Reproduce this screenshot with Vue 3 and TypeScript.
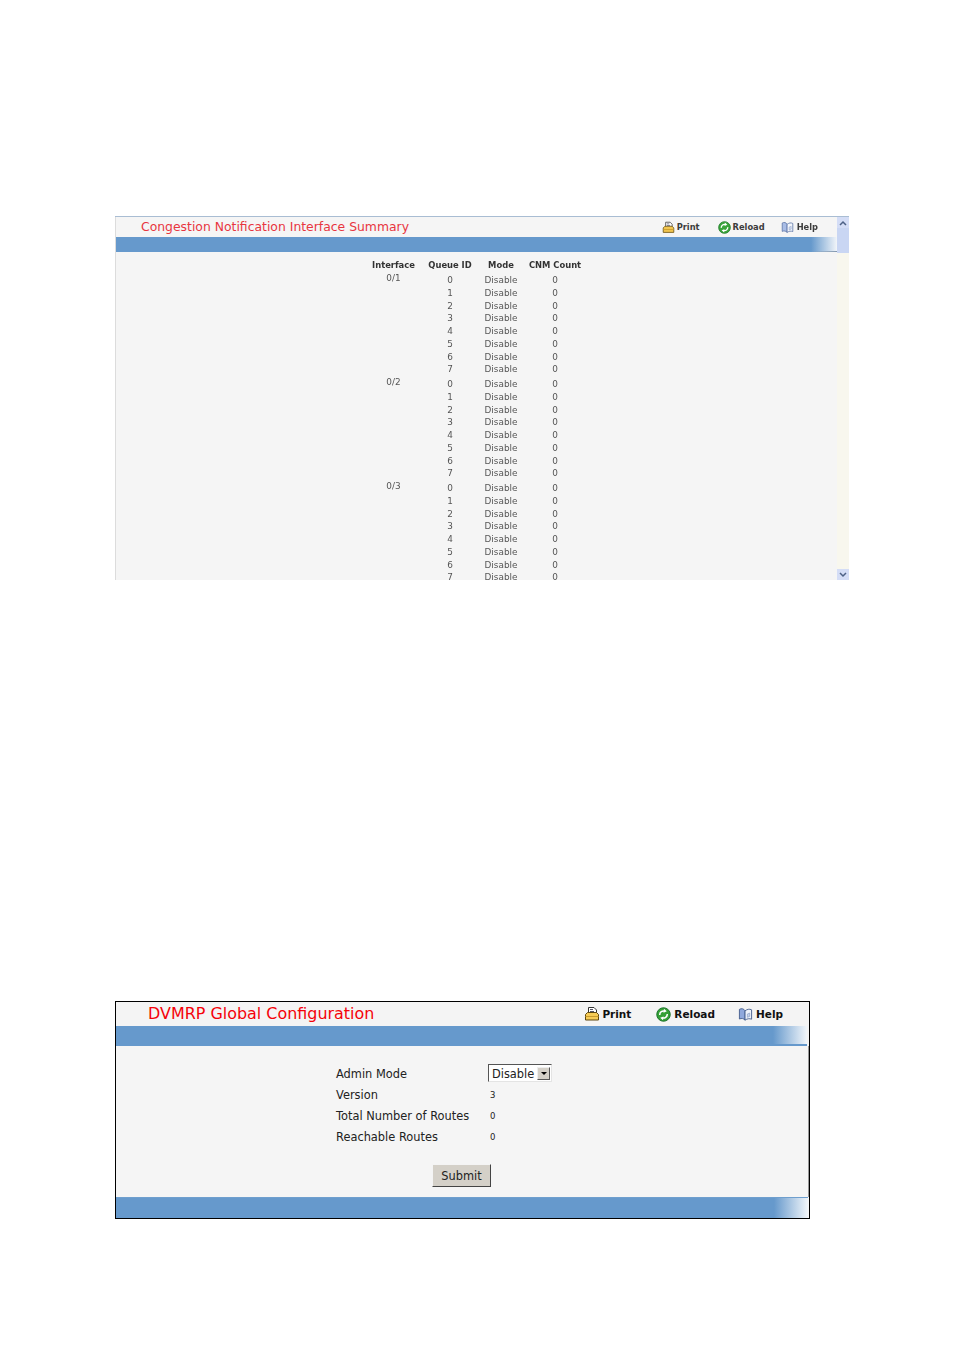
<script setup lang="ts">
interface Group { port: string; queues: number[] }
const queues = [0, 1, 2, 3, 4, 5, 6, 7]
const groups: Group[] = [
  { port: '0/1', queues },
  { port: '0/2', queues },
  { port: '0/3', queues },
]
const facts = [
  { label: 'Version', value: '3' },
  { label: 'Total Number of Routes', value: '0' },
  { label: 'Reachable Routes', value: '0' },
]
</script>

<template>
  <div class="page">
    <section class="shot summary">
      <div class="frame">
        <header class="head">
          <h1 class="title">Congestion Notification Interface Summary</h1>
          <nav class="tools">
            <span class="tool print">
              <svg width="13" height="13" viewBox="0 0 16 16"><path d="M4.500 1.500h5.500l2.500 2.500v5h-8z" fill="#fff" stroke="#444" /><path d="M1.500 8.500l2-2h9l2 2v5.500h-13z" fill="#f2c650" stroke="#6b5415" /><path d="M1.500 10.500h13" stroke="#c99a2a" /><path d="M6 3.500h3M6 5.500h4" stroke="#667" /></svg>
              Print
            </span>
            <span class="tool reload">
              <svg width="13" height="13" viewBox="0 0 16 16"><circle cx="8" cy="8" r="7.200" fill="#3aa53a" stroke="#1d7a2a" /><path d="M4 8.500a4 4 0 0 1 5.500-4M12 7.500a4 4 0 0 1-5.500 4" fill="none" stroke="#fff" stroke-width="1.600" /><path d="M8.500 1.800l3 2.700-3.500 1.500zM7.500 14.200l-3-2.700 3.500-1.500z" fill="#fff" /></svg>
              Reload
            </span>
            <span class="tool help">
              <svg width="13" height="13" viewBox="0 0 16 16"><path d="M1.500 2.500c2.500-1.300 4.500-.8 6 1.500v10c-1.500-1.800-3.500-2.200-6-1.200z" fill="#a9bde6" stroke="#5f76a8" /><path d="M14.500 3c-2.500-1.200-4.500-.6-7 1v10c2.500-1.600 4.500-1.900 7-1z" fill="#f4f7fc" stroke="#5f76a8" /><path d="M10 7.500l2.500-1v3.500l-2.500 1z" fill="#cfdaf0" stroke="#8ea0c4" stroke-width=".6" /></svg>
              Help
            </span>
          </nav>
        </header>
        <div class="band"></div>
        <div class="results">
          <div class="grid labels">
            <span>Interface</span><span>Queue ID</span><span>Mode</span><span>CNM Count</span>
          </div>
          <div v-for="g in groups" :key="g.port" class="grid group">
            <span class="port">{{ g.port }}</span>
            <template v-for="q in g.queues" :key="q">
              <span class="cell">{{ q }}</span><span class="cell">Disable</span><span class="cell">0</span>
            </template>
          </div>
        </div>
      </div>
      <div class="scrollbar">
        <span class="arrow"><svg width="8" height="6" viewBox="0 0 8 6"><path d="M1 5l3-3 3 3" fill="none" stroke="#4d6185" stroke-width="1.500" /></svg></span>
        <span class="thumb"></span>
        <span class="rail"></span>
        <span class="arrow"><svg width="8" height="6" viewBox="0 0 8 6"><path d="M1 1l3 3 3-3" fill="none" stroke="#4d6185" stroke-width="1.500" /></svg></span>
      </div>
    </section>

    <section class="shot dvmrp">
      <header class="head large">
        <h1 class="title">DVMRP Global Configuration</h1>
        <nav class="tools">
          <span class="tool print">
            <svg width="16" height="16" viewBox="0 0 16 16"><path d="M4.500 1.500h5.500l2.500 2.500v5h-8z" fill="#fff" stroke="#333" /><path d="M1.500 8.500l2-2h9l2 2v5.500h-13z" fill="#f6cb55" stroke="#5c4710" /><path d="M1.500 10.500h13" stroke="#c99a2a" /><path d="M6 3.500h3M6 5.500h4" stroke="#556" /></svg>
            Print
          </span>
          <span class="tool reload">
            <svg width="15" height="15" viewBox="0 0 16 16"><circle cx="8" cy="8" r="7.200" fill="#35a035" stroke="#17702a" /><path d="M4 8.500a4 4 0 0 1 5.500-4M12 7.500a4 4 0 0 1-5.500 4" fill="none" stroke="#fff" stroke-width="1.600" /><path d="M8.500 1.800l3 2.700-3.500 1.500zM7.500 14.200l-3-2.700 3.500-1.500z" fill="#fff" /></svg>
            Reload
          </span>
          <span class="tool help">
            <svg width="15" height="15" viewBox="0 0 16 16"><path d="M1.500 2.500c2.500-1.300 4.500-.8 6 1.500v10c-1.500-1.800-3.500-2.200-6-1.200z" fill="#8fa8dc" stroke="#47608f" /><path d="M14.500 3c-2.500-1.200-4.500-.6-7 1v10c2.500-1.600 4.500-1.900 7-1z" fill="#eef2fa" stroke="#47608f" /><path d="M10 7.500l2.500-1v3.500l-2.500 1z" fill="#c4d2ec" stroke="#7f93bc" stroke-width=".6" /></svg>
            Help
          </span>
        </nav>
      </header>
      <div class="band"></div>
      <form class="form" @submit.prevent>
        <div class="facts">
          <span class="key">Admin Mode</span>
          <span class="picker">
            <span class="picked">Disable</span>
            <span class="drop"><i></i></span>
          </span>
          <template v-for="f in facts" :key="f.label">
            <span class="key">{{ f.label }}</span><span class="val">{{ f.value }}</span>
          </template>
        </div>
        <button class="submit" type="submit">Submit</button>
      </form>
      <div class="band foot"></div>
    </section>
  </div>
</template>

<style scoped>
.page {
  width: 954px;
  height: 1350px;
  box-sizing: border-box;
  padding: 216px 0 0 115px;
  background: #fff;
  font-family: "DejaVu Sans", Verdana, sans-serif;
  overflow: hidden;
}
.shot { box-sizing: border-box; }
.summary {
  width: 734px;
  height: 364px;
  display: flex;
  overflow: hidden;
  border-top: 1px solid #a9bdd3;
}
.frame {
  width: 722px;
  background: #f5f5f5;
  border-left: 1px solid #dcdcdc;
  box-sizing: border-box;
  filter: blur(0.35px);
}
.head {
  display: flex;
  align-items: center;
  justify-content: space-between;
  height: 20px;
}
.title {
  margin: 0 0 2px;
  font-weight: 400;
  font-size: 12.4px;
  color: #e8363f;
  padding-left: 25px;
  white-space: nowrap;
}
.tools {
  display: flex;
  align-items: center;
  font-size: 8.3px;
  color: #3c3c3c;
  font-weight: 600;
}
.tool { display: flex; align-items: center; gap: 2px; }
.summary .print { margin-right: 18px; }
.summary .reload { margin-right: 16px; }
.summary .help { gap: 3px; }
.summary .tools { padding-right: 19px; }
.band {
  height: 15px;
  background-color: #6699cc;
  background-image:
    linear-gradient(90deg, transparent calc(100% - 26px), #7f95ad 100%),
    linear-gradient(90deg, #6699cc calc(100% - 26px), #f2f5f9 100%);
  background-size: 100% 1px, 100% 100%;
  background-position: 0 100%, 0 0;
  background-repeat: no-repeat;
}
.results { padding-top: 6px; }
.grid {
  display: grid;
  grid-template-columns: 55px 58px 44px 64px;
  margin-left: 250px;
  text-align: center;
  font-size: 8.9px;
  line-height: 12.75px;
  color: #555;
}
.labels {
  font-weight: 700;
  color: #333;
  font-size: 8.4px;
  height: 16px;
  line-height: 14px;
}
.group { margin-bottom: 2px; }
.port {
  grid-column: 1;
  grid-row: 1 / span 8;
  line-height: 9px;
}
.cell:nth-child(3n + 2) { grid-column: 2; }
.scrollbar {
  width: 12px;
  display: flex;
  flex-direction: column;
  background: #f8f7ee;
  filter: blur(0.35px);
}
.arrow {
  height: 11px;
  background: #d4ddf6;
  display: flex;
  align-items: center;
  justify-content: center;
}
.thumb { height: 25px; background: #c9d6f3; }
.rail { flex: 1; }

.dvmrp {
  width: 695px;
  height: 218px;
  margin-top: 421px;
  border: 1px solid #000;
  background: #f4f4f4;
  display: flex;
  flex-direction: column;
}
.head.large { height: 24px; }
.large .title {
  font-size: 15.95px;
  color: #f5020a;
  padding-left: 32px;
}
.large .tools {
  font-size: 10.5px;
  color: #111;
  padding-right: 26px;
}
.large .tool { gap: 3px; }
.large .print { gap: 2px; margin-right: 25px; }
.large .reload { margin-right: 23px; }
.dvmrp .band {
  height: 18px;
  margin-right: 2px;
  box-sizing: content-box;
  border-bottom: 2px solid #6699cc;
  background-image: linear-gradient(90deg, #6699cc calc(100% - 34px), #f2f6fa 100%);
  background-size: 100% 100%;
}
.form {
  flex: 1;
  display: flex;
  flex-direction: column;
  padding: 17px 0 0 220px;
  font-size: 11.4px;
  color: #222;
  background: #f5f5f5;
  border-right: 1px solid #999;
}
.facts {
  display: grid;
  grid-template-columns: 152px auto;
  grid-auto-rows: 21px;
  align-items: center;
  justify-content: start;
}
.val { font-size: 8.5px; padding-left: 2px; }
.picker {
  align-self: start;
  margin-top: 1px;
  box-sizing: border-box;
  width: 64px;
  height: 18px;
  display: flex;
  align-items: center;
  justify-content: space-between;
  background: #fff;
  border: 1px solid;
  border-color: #555 #e4e4e4 #e4e4e4 #555;
  padding: 1px 1px 0 3px;
}
.drop {
  width: 13px;
  height: 13px;
  background: #d4d0c8;
  border: 1px solid;
  border-color: #eee #555 #555 #eee;
  box-sizing: border-box;
  display: flex;
  align-items: center;
  justify-content: center;
}
.drop i {
  width: 0;
  height: 0;
  border: 3px solid transparent;
  border-top-color: #000;
  border-bottom-width: 0;
}
.submit {
  align-self: flex-start;
  margin: 17px 0 0 96px;
  width: 59px;
  height: 23px;
  padding: 0;
  background: #d4d0c8;
  border: 1px solid;
  border-color: #f4f4f4 #444 #444 #f4f4f4;
  font: 11.4px "DejaVu Sans", Verdana, sans-serif;
  color: #222;
}
.dvmrp .band.foot {
  height: 20px;
  margin-right: 1px;
  border-bottom: 0;
  border-top: 1px solid #6f9fce;
}
</style>

<style>
html, body { margin: 0; background: #fff; }
</style>
